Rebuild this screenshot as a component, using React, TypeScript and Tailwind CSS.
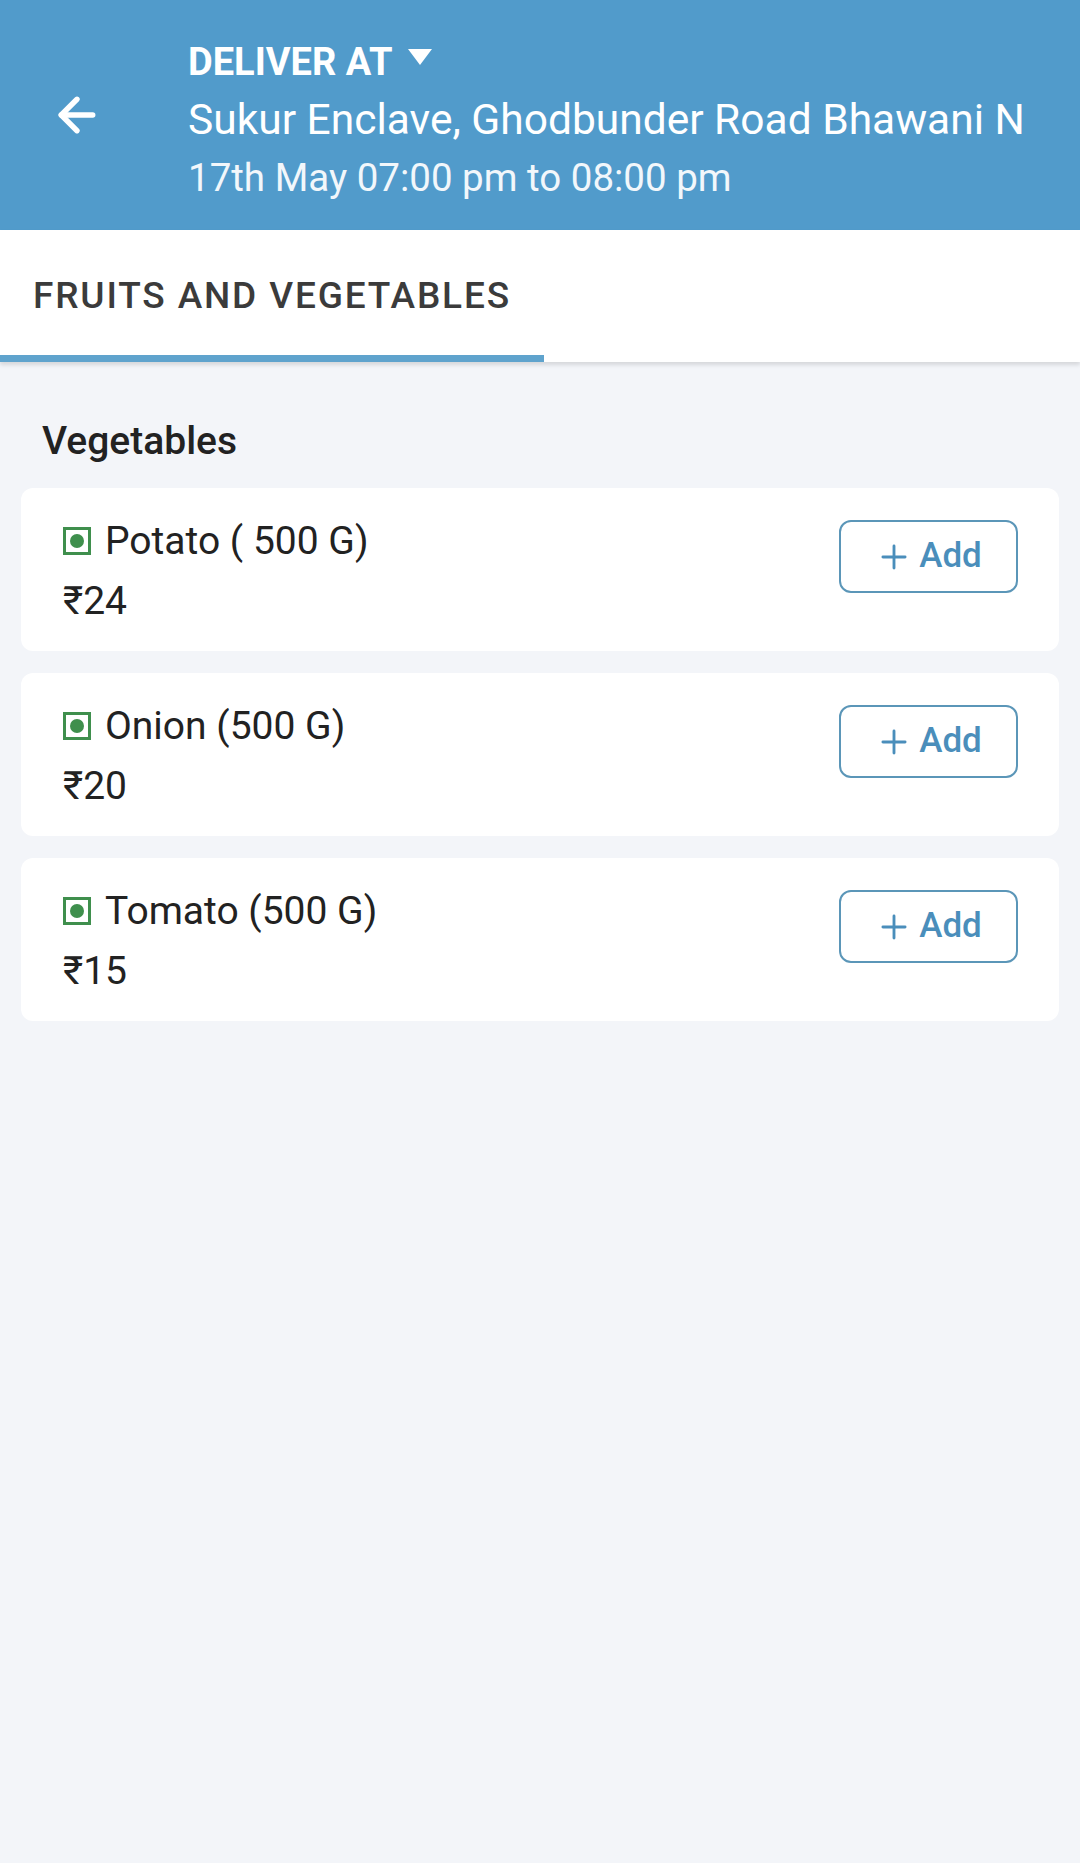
import { ArrowLeft, Plus } from 'lucide-react';

const items = [
  { name: 'Potato ( 500 G)', price: '₹24' },
  { name: 'Onion (500 G)', price: '₹20' },
  { name: 'Tomato (500 G)', price: '₹15' },
];

function VegMark() {
  return (
    <span className="w-[28px] h-[28px] border-[3px] border-[#3f8f4d] flex items-center justify-center shrink-0">
      <span className="w-[14px] h-[14px] rounded-full bg-[#3f8f4d]" />
    </span>
  );
}

export default function App() {
  return (
    <div className="min-h-[1863px] bg-[#f3f5f9] font-['Roboto',sans-serif]">
      {/* Header */}
      <header className="h-[230px] bg-[#519bcb] flex items-center text-white overflow-hidden">
        <div className="w-[188px] shrink-0 flex items-center pl-[50px]">
          <ArrowLeft className="w-[54px] h-[54px]" strokeWidth={2.4} />
        </div>
        <div className="flex-1 min-w-0 pr-[46px] pt-[10px]">
          <div className="flex items-center gap-[14px] leading-none">
            <span className="text-[38px] font-bold">DELIVER AT</span>
            <svg width="26" height="18" viewBox="0 0 26 18" className="mb-[10px]">
              <path d="M1 1 L25 1 L13 17 Z" fill="white" />
            </svg>
          </div>
          <div className="text-[42.5px] whitespace-nowrap overflow-hidden mt-[18px] leading-none">
            Sukur Enclave, Ghodbunder Road Bhawani N
          </div>
          <div className="text-[38.5px] mt-[18px] leading-none text-[#f2f7fb]">17th May 07:00 pm to 08:00 pm</div>
        </div>
      </header>

      {/* Tabs */}
      <div className="bg-white h-[132px] flex shadow-[0_3px_4px_rgba(0,0,0,0.12)] relative">
        <div className="w-[544px] flex flex-col">
          <div className="flex-1 flex items-center pl-[33px] pt-[6px] text-[37px] font-medium tracking-[0.05em] text-[#3b3b3b]">
            FRUITS AND VEGETABLES
          </div>
          <div className="h-[7px] bg-[#5fa3cd]" />
        </div>
      </div>

      {/* Content */}
      <div className="px-[21px] pt-[60px]">
        <h2 className="pl-[21px] text-[39px] font-medium text-[#222] leading-none mb-[27px]">Vegetables</h2>
        <div className="flex flex-col gap-[22px]">
          {items.map((it) => (
            <div key={it.name} className="bg-white rounded-[12px] h-[163px] flex justify-between pl-[42px] pr-[41px]">
              <div className="flex flex-col pt-[31px]">
                <div className="flex items-center gap-[14px]">
                  <VegMark />
                  <span className="text-[39px] text-[#222] leading-[44px]">{it.name}</span>
                </div>
                <div className="text-[39px] text-[#222] leading-[44px] mt-[16px]">{it.price}</div>
              </div>
              <div className="pt-[32px]">
                <button className="w-[179px] h-[73px] border-[2.5px] border-[#5b96b8] rounded-[12px] flex items-center justify-center gap-[6px] text-[#4a8ebb]">
                  <Plus className="w-[38px] h-[38px]" strokeWidth={1.8} />
                  <span className="text-[35px] font-medium">Add</span>
                </button>
              </div>
            </div>
          ))}
        </div>
      </div>
    </div>
  );
}
